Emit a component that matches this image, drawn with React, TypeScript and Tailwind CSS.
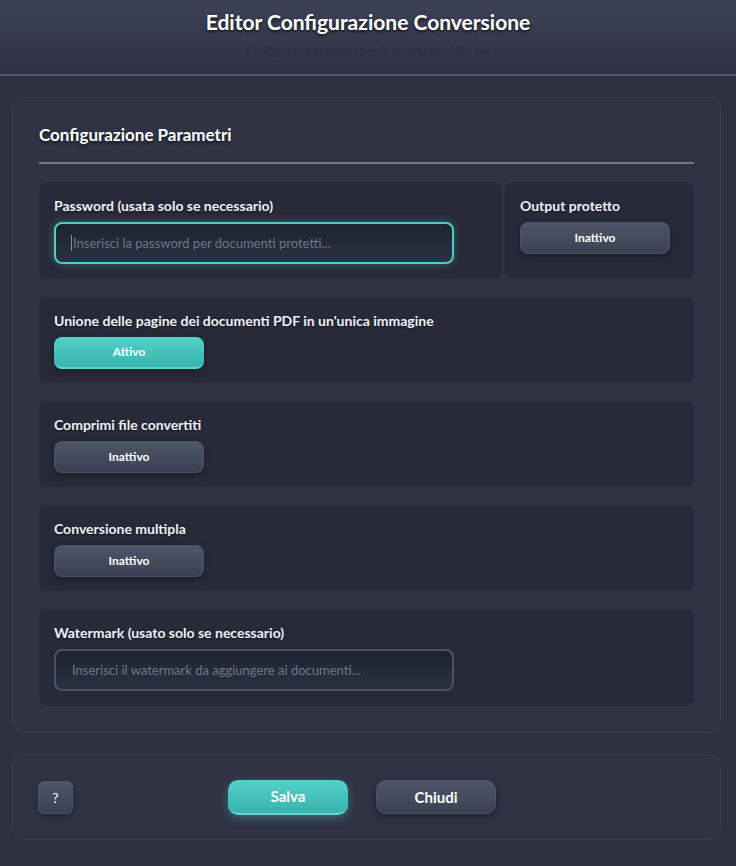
import React from "react";

const font = { fontFamily: "Lato, 'Noto Sans', sans-serif" };

function ToggleBtn({ active, label }: { active?: boolean; label: string }) {
  return (
    <button
      className={
        active
          ? "w-[150px] h-[32px] rounded-[8px] bg-gradient-to-b from-[#50d2c8] to-[#3ab4ac] border-b-2 border-[#5bd8cf] text-white text-[12px] font-bold shadow-[0_2px_6px_rgba(0,0,0,0.3)]"
          : "w-[150px] h-[32px] rounded-[8px] bg-gradient-to-b from-[#4d5668] to-[#3a4152] border border-[#4c5466] text-white text-[12px] font-bold shadow-[0_2px_6px_rgba(0,0,0,0.35)]"
      }
    >
      {label}
    </button>
  );
}

function Label({ children }: { children: React.ReactNode }) {
  return (
    <div className="text-[14px] leading-[18px] font-bold text-[#eef1f8] mb-[7px] [text-shadow:0_1px_2px_rgba(0,0,0,0.4)]">
      {children}
    </div>
  );
}

export default function App() {
  return (
    <div style={font} className="min-h-[866px] w-[736px] bg-[#2d3041] flex flex-col">
      <header className="h-[76px] bg-gradient-to-b from-[#3d4155] to-[#2f3244] border-b-2 border-[#565968] flex flex-col items-center">
        <h1 className="mt-[8px] text-[21px] leading-[28px] font-bold text-white [text-shadow:0_2px_3px_rgba(0,0,0,0.6)]">
          Editor Configurazione Conversione
        </h1>
        <p className="mt-[7px] text-[12px] leading-[16px] text-[#2b2e3c]">
          Configura i parametri per le conversioni dei file
        </p>
      </header>

      <main className="pl-[12px] pr-[15px] pt-[21px]">
        <section className="rounded-[12px] border border-[#3a3d4f] bg-[#303344] px-[26px] pt-[25px] pb-[26px]">
          <h2 className="text-[17px] leading-[24px] font-bold text-white [text-shadow:0_2px_3px_rgba(0,0,0,0.5)]">
            Configurazione Parametri
          </h2>
          <div className="mt-[15px] h-[2px] bg-[#77787f]" />

          <div className="mt-[18px] flex flex-col gap-[18px]">
            <div className="grid grid-cols-[1fr_189px] gap-[3px]">
              <div className="rounded-[8px] bg-[#272a38] p-[15px]">
                <Label>Password (usata solo se necessario)</Label>
                <div className="relative w-[400px]">
                  <input
                    type="password"
                    placeholder="Inserisci la password per documenti protetti..."
                    className="w-[400px] h-[42px] rounded-[8px] border-2 border-[#4ecdc4] bg-gradient-to-b from-[#1f2330] to-[#293142] px-[17px] text-[13px] text-white placeholder:text-[#6e7689] outline-none shadow-[0_0_8px_rgba(78,205,196,0.35)]"
                  />
                  <span className="absolute left-[17px] top-[13px] h-[16px] w-px bg-[#8a8f9c]" />
                </div>
              </div>
              <div className="rounded-[8px] bg-[#272a38] p-[15px]">
                <Label>Output protetto</Label>
                <ToggleBtn label="Inattivo" />
              </div>
            </div>

            <div className="rounded-[8px] bg-[#272a38] px-[15px] pt-[15px] pb-[14px]">
              <Label>Unione delle pagine dei documenti PDF in un'unica immagine</Label>
              <ToggleBtn active label="Attivo" />
            </div>

            <div className="rounded-[8px] bg-[#272a38] px-[15px] pt-[15px] pb-[14px]">
              <Label>Comprimi file convertiti</Label>
              <ToggleBtn label="Inattivo" />
            </div>

            <div className="rounded-[8px] bg-[#272a38] px-[15px] pt-[15px] pb-[14px]">
              <Label>Conversione multipla</Label>
              <ToggleBtn label="Inattivo" />
            </div>

            <div className="rounded-[8px] bg-[#272a38] p-[15px]">
              <Label>Watermark (usato solo se necessario)</Label>
              <input
                type="text"
                placeholder="Inserisci il watermark da aggiungere ai documenti..."
                className="w-[400px] h-[42px] rounded-[8px] border-2 border-[#4a5162] bg-gradient-to-b from-[#1f2330] to-[#293142] px-[16px] text-[13px] text-white placeholder:text-[#6e7689] outline-none"
              />
            </div>
          </div>
        </section>

        <footer className="mt-[21px] h-[86px] rounded-[12px] border border-[#393c4e] bg-[#303344] px-[25px] flex items-center">
          <button className="w-[35px] h-[33px] rounded-[6px] bg-gradient-to-b from-[#4d5668] to-[#3a4152] border border-[#4c5466] text-white text-[14px] shadow-[0_2px_6px_rgba(0,0,0,0.35)]">
            ?
          </button>
          <button className="ml-[155px] w-[120px] h-[35px] rounded-[10px] bg-gradient-to-b from-[#50d2c8] to-[#3ab4ac] border-b-2 border-[#5bd8cf] text-white text-[15px] font-bold shadow-[0_3px_10px_rgba(78,205,196,0.35)]">
            Salva
          </button>
          <button className="ml-[28px] w-[120px] h-[34px] rounded-[10px] bg-gradient-to-b from-[#4d5668] to-[#3a4152] border border-[#4c5466] text-white text-[15px] font-bold shadow-[0_3px_8px_rgba(0,0,0,0.4)]">
            Chiudi
          </button>
        </footer>
      </main>
    </div>
  );
}
